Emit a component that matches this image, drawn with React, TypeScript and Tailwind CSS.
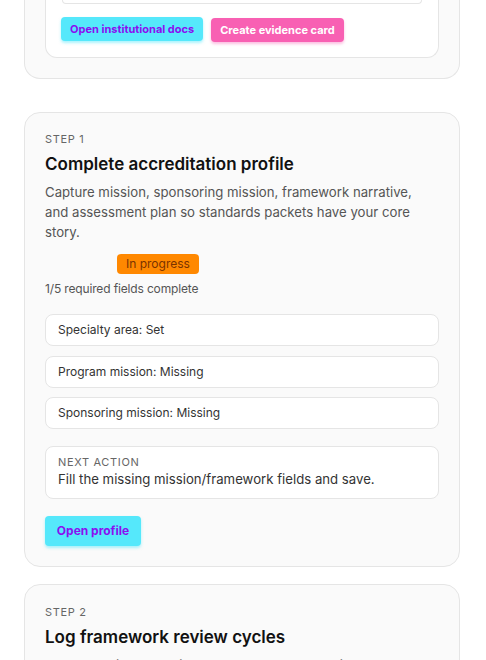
import React from "react";

const font = { fontFamily: "Inter, 'Noto Sans', Arial, sans-serif" };

function Row({ text }: { text: string }) {
  return (
    <div className="h-[32px] flex items-center rounded-[8px] border border-[#e5e5e5] bg-white px-[12px] text-[12px] text-[#333]">
      {text}
    </div>
  );
}

export default function App() {
  return (
    <div className="min-h-[660px] bg-white pl-[24px] pr-[26px] pb-10" style={font}>
      {/* top partially scrolled card */}
      <div className="rounded-b-[16px] border border-t-0 border-[#e5e5e5] bg-[#fafafa] px-[20px] pb-[20px]">
        <div className="rounded-b-[12px] border border-t-0 border-[#e5e5e5] bg-white px-[15px] pb-[15px]">
          <div className="h-[4px] rounded-b-[8px] border border-t-0 border-[#e5e5e5] bg-white mx-[1px]" />
          <div className="mt-[13px] flex gap-[8px]">
            <button className="h-[24px] px-[9px] rounded-[4px] bg-[#55e8fb] text-[11px] font-bold text-[#8a0ff0] shadow-[0_2px_3px_rgba(85,232,251,0.5)]">
              Open institutional docs
            </button>
            <button className="mt-[1px] h-[24px] px-[9px] rounded-[4px] bg-[#f860b3] text-[11px] font-bold text-white shadow-[0_2px_3px_rgba(248,96,179,0.4)]">
              Create evidence card
            </button>
          </div>
        </div>
      </div>

      {/* Step 1 */}
      <div className="mt-[33px] rounded-[16px] border border-[#e5e5e5] bg-[#fafafa] px-[20px] pt-[19px] pb-[20px]">
        <div className="text-[11px] leading-[14px] tracking-[0.06em] text-[#666]">STEP 1</div>
        <div className="mt-[7px] text-[17px] leading-[22px] font-semibold text-[#111]">
          Complete accreditation profile
        </div>
        <p className="mt-[7px] pr-[20px] text-[13.2px] leading-[20px] text-[#555]">
          Capture mission, sponsoring mission, framework narrative, and assessment plan so standards packets have your core story.
        </p>
        <div className="mt-[12px] flex items-center gap-[8px]">
          <span className="w-[64px] h-[20px]" />
          <span className="h-[20px] px-[9px] flex items-center rounded-[4px] bg-[#ff8800] text-[12px] text-[#7a3300]">
            In progress
          </span>
        </div>
        <div className="mt-[8px] text-[12px] leading-[14px] tracking-[-0.15px] text-[#555]">1/5 required fields complete</div>
        <div className="mt-[18px] flex flex-col gap-[9.5px]">
          <Row text="Specialty area: Set" />
          <Row text="Program mission: Missing" />
          <Row text="Sponsoring mission: Missing" />
        </div>
        <div className="mt-[17px] rounded-[8px] border border-[#e5e5e5] bg-white px-[12px] pt-[8px] pb-[9px]">
          <div className="text-[11px] leading-[14px] tracking-[0.06em] text-[#666]">NEXT ACTION</div>
          <div className="text-[13.2px] leading-[20px] text-[#333]">Fill the missing mission/framework fields and save.</div>
        </div>
        <button className="mt-[17px] h-[30px] w-[96px] rounded-[4px] bg-[#55e8fb] text-[12px] font-bold text-[#8a0ff0] shadow-[0_2px_3px_rgba(85,232,251,0.5)]">
          Open profile
        </button>
      </div>

      {/* Step 2 */}
      <div className="mt-[17px] rounded-[16px] border border-[#e5e5e5] bg-[#fafafa] px-[20px] pt-[20px] pb-[20px]">
        <div className="text-[11px] leading-[14px] tracking-[0.06em] text-[#666]">STEP 2</div>
        <div className="mt-[7px] text-[17px] leading-[22px] font-semibold text-[#111]">
          Log framework review cycles
        </div>
        <p className="mt-[7px] pr-[20px] text-[13.2px] leading-[20px] text-[#555]">
          Record advisory, curriculum, and standards review cycles so the packet shows ongoing evaluation.
        </p>
      </div>
    </div>
  );
}
